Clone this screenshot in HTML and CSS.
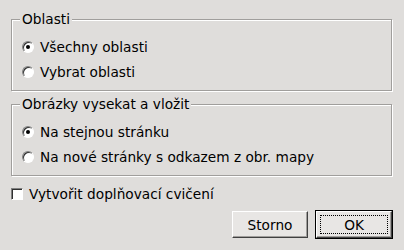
FILE: index.html
```html
<!DOCTYPE html>
<html lang="cs">
<head>
    <meta charset="UTF-8">
    <title>Oblasti</title>
    <link rel="stylesheet" href="styles.css">
</head>
<body>

    <!-- Oblasti -->
    <div class="group">
        <span class="group-title">Oblasti</span>
        <div class="option">
            <span class="radio checked"></span>
            <span>Všechny oblasti</span>
        </div>
        <div class="option">
            <span class="radio"></span>
            <span>Vybrat oblasti</span>
        </div>
    </div>

    <!-- Obrazky -->
    <div class="group second">
        <span class="group-title">Obrázky vysekat a vložit</span>
        <div class="option">
            <span class="radio checked"></span>
            <span>Na stejnou stránku</span>
        </div>
        <div class="option">
            <span class="radio"></span>
            <span>Na nové stránky s odkazem z obr. mapy</span>
        </div>
    </div>

    <div class="check-row">
        <span class="checkbox"></span>
        <span>Vytvořit doplňovací cvičení</span>
    </div>

    <div class="button-row">
        <button class="btn">Storno</button>
        <div class="default-frame">
            <button class="btn focused"><span class="focus-ring">OK</span></button>
        </div>
    </div>

</body>
</html>
```

FILE: styles.css
```css
body {
    font-family: 'DejaVu Sans', sans-serif;
    font-size: 13.7px;
    color: #000;
    background-color: #dfdddb;
    margin: 0;
    padding: 19px 11px 0 11px;
    width: 404px;
    height: 250px;
    box-sizing: border-box;
    overflow: hidden;
}

.group {
    position: relative;
    height: 72px;
    margin-right: 1px;
    box-sizing: border-box;
    border: 1px solid #a09e9c;
    box-shadow: inset 1px 1px 0 #fff, 1px 1px 0 #fff;
    padding: 14px 0 6px 10px;
}

.group.second {
    margin-top: 13px;
}

.group-title {
    position: absolute;
    top: -9px;
    left: 8px;
    padding: 0 2px;
    line-height: 16px;
    background-color: #dfdddb;
}

.option {
    display: flex;
    align-items: center;
    height: 25px;
    gap: 6px;
}

.radio {
    position: relative;
    width: 12px;
    height: 12px;
    box-sizing: border-box;
    border-radius: 50%;
    background: #fff;
    border: 1px solid;
    border-color: #808080 #fff #fff #808080;
    box-shadow: inset 1px 1px 0 #303030;
}

.radio.checked::after {
    content: "";
    position: absolute;
    left: 3px;
    top: 3px;
    width: 4px;
    height: 4px;
    border-radius: 50%;
    background: #000;
}

.check-row {
    display: flex;
    align-items: center;
    height: 20px;
    margin-top: 8px;
    gap: 6px;
}

.checkbox {
    width: 12px;
    height: 12px;
    box-sizing: border-box;
    background: #fff;
    border: 1px solid;
    border-color: #808080 #fff #fff #808080;
    box-shadow: inset 1px 1px 0 #303030;
}

.button-row {
    display: flex;
    justify-content: flex-end;
    align-items: center;
    gap: 7px;
    margin-top: 6px;
}

.btn {
    font-family: 'DejaVu Sans', sans-serif;
    font-size: 13.7px;
    color: #000;
    width: 76px;
    height: 27px;
    padding: 0;
    background: #e8e6e4;
    border: 1px solid;
    border-color: #fff #404040 #404040 #fff;
    box-shadow: inset -1px -1px 0 #a09e9c;
    box-sizing: border-box;
}

.default-frame {
    border: 1px solid #000;
    display: flex;
}

.btn.focused {
    display: flex;
    padding: 3px;
}

.focus-ring {
    flex: 1;
    display: flex;
    align-items: center;
    justify-content: center;
    border: 1px dotted #000;
}
```
